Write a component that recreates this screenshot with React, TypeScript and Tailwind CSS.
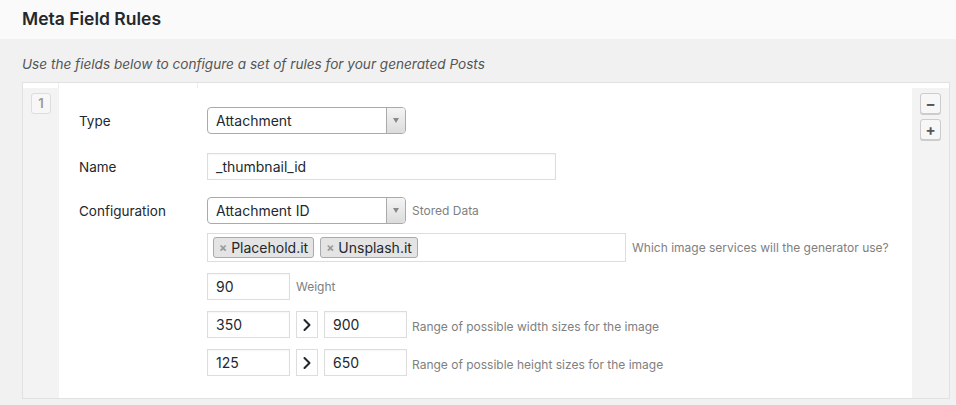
import { ChevronRight } from "lucide-react";

const font = { fontFamily: "Inter, 'Liberation Sans', sans-serif" };

function Select({ value }: { value: string }) {
  return (
    <div className="flex h-[27px] w-[199px] overflow-hidden rounded-[4px] border border-[#aaa] bg-white">
      <div className="flex flex-1 items-center pl-[8px] text-[14px] text-[#23282d]">{value}</div>
      <div className="flex w-[19px] items-center justify-center border-l border-[#aaa] bg-gradient-to-b from-[#f4f4f4] to-[#dcdcdc]">
        <span className="h-0 w-0 border-x-[3.5px] border-t-[5px] border-x-transparent border-t-[#888]" />
      </div>
    </div>
  );
}

function TextInput({ value, width }: { value: string; width: string }) {
  return (
    <div
      className={`flex h-[27px] items-center border border-[#ddd] bg-white pl-[8px] text-[14px] text-[#23282d] shadow-[inset_0_1px_2px_rgba(0,0,0,0.04)] ${width}`}
    >
      {value}
    </div>
  );
}

function Help({ children }: { children: React.ReactNode }) {
  return <span className="text-[12px] text-[#808080]">{children}</span>;
}

function Tag({ label }: { label: string }) {
  return (
    <span className="flex h-[21px] items-center gap-[4px] rounded-[3px] border border-[#aaa] bg-[#e4e4e4] px-[5px] text-[14px] text-[#23282d]">
      <span className="text-[12px] font-bold text-[#999]">×</span>
      {label}
    </span>
  );
}

function Range({ min, max, help }: { min: string; max: string; help: string }) {
  return (
    <div className="flex items-center">
      <TextInput value={min} width="w-[83px]" />
      <div className="ml-[6px] flex h-[27px] w-[22px] items-center justify-center border border-[#ddd] bg-white text-[#23282d]">
        <ChevronRight size={20} strokeWidth={2.5} />
      </div>
      <div className="ml-[6px]">
        <TextInput value={max} width="w-[83px]" />
      </div>
      <span className="ml-[5px]">
        <Help>{help}</Help>
      </span>
    </div>
  );
}

function SideButton({ children }: { children: React.ReactNode }) {
  return (
    <div className="flex h-[21px] w-[21px] items-center justify-center rounded-[3px] border border-[#ccc] bg-[#f7f7f7] text-[15px] font-bold leading-none text-[#555] shadow-[0_1px_0_#ccc]">
      {children}
    </div>
  );
}

export default function App() {
  return (
    <div className="min-h-[405px] w-[956px] bg-[#f1f1f1]" style={font}>
      <div className="flex h-[39px] items-center bg-[#fafafa] pl-[22px]">
        <h2 className="text-[17.5px] font-semibold text-[#23282d]">Meta Field Rules</h2>
      </div>

      <p className="pl-[22px] pt-[15px] text-[13.6px] italic text-[#555]">
        Use the fields below to configure a set of rules for your generated Posts
      </p>

      <div className="ml-[22px] mt-[8px] w-[928px] border border-[#e1e1e1] bg-white">
        {/* header strip */}
        <div className="flex h-[5px]">
          <div className="w-[36px] border-r border-[#eee]" />
          <div className="w-[139px] border-r border-[#eee]" />
          <div className="flex-1" />
        </div>

        <div className="flex">
          <div className="w-[36px] bg-[#f3f3f3] pl-[8px] pt-[5px]">
            <div className="flex h-[21px] w-[20px] items-center justify-center rounded-[3px] border border-[#ddd] bg-[#f7f7f7] text-[13px] font-semibold text-[#999]">
              1
            </div>
          </div>

          <div className="flex-1 pb-[22px] pl-[20px] pt-[19px]">
            <div className="flex items-center">
              <span className="w-[128px] text-[13.5px] text-[#23282d]">Type</span>
              <Select value="Attachment" />
            </div>

            <div className="mt-[19px] flex items-center">
              <span className="w-[128px] text-[13.5px] text-[#23282d]">Name</span>
              <TextInput value="_thumbnail_id" width="w-[349px]" />
            </div>

            <div className="mt-[17px] flex">
              <span className="w-[128px] pt-[4px] text-[13.5px] text-[#23282d]">Configuration</span>
              <div className="flex flex-col">
                <div className="flex items-center gap-[6px]">
                  <Select value="Attachment ID" />
                  <Help>Stored Data</Help>
                </div>

                <div className="mt-[9px] flex items-center gap-[6px]">
                  <div className="flex h-[29px] w-[419px] items-center gap-[6px] border border-[#ddd] bg-white pl-[5px]">
                    <Tag label="Placehold.it" />
                    <Tag label="Unsplash.it" />
                  </div>
                  <Help>Which image services will the generator use?</Help>
                </div>

                <div className="mt-[11px] flex items-center gap-[6px]">
                  <TextInput value="90" width="w-[83px]" />
                  <Help>Weight</Help>
                </div>

                <div className="mt-[11px]">
                  <Range min="350" max="900" help="Range of possible width sizes for the image" />
                </div>
                <div className="mt-[11px]">
                  <Range min="125" max="650" help="Range of possible height sizes for the image" />
                </div>
              </div>
            </div>
          </div>

          <div className="flex w-[37px] flex-col items-center gap-[5px] bg-[#f3f3f3] pt-[5px]">
            <SideButton>−</SideButton>
            <SideButton>+</SideButton>
          </div>
        </div>
      </div>
    </div>
  );
}
